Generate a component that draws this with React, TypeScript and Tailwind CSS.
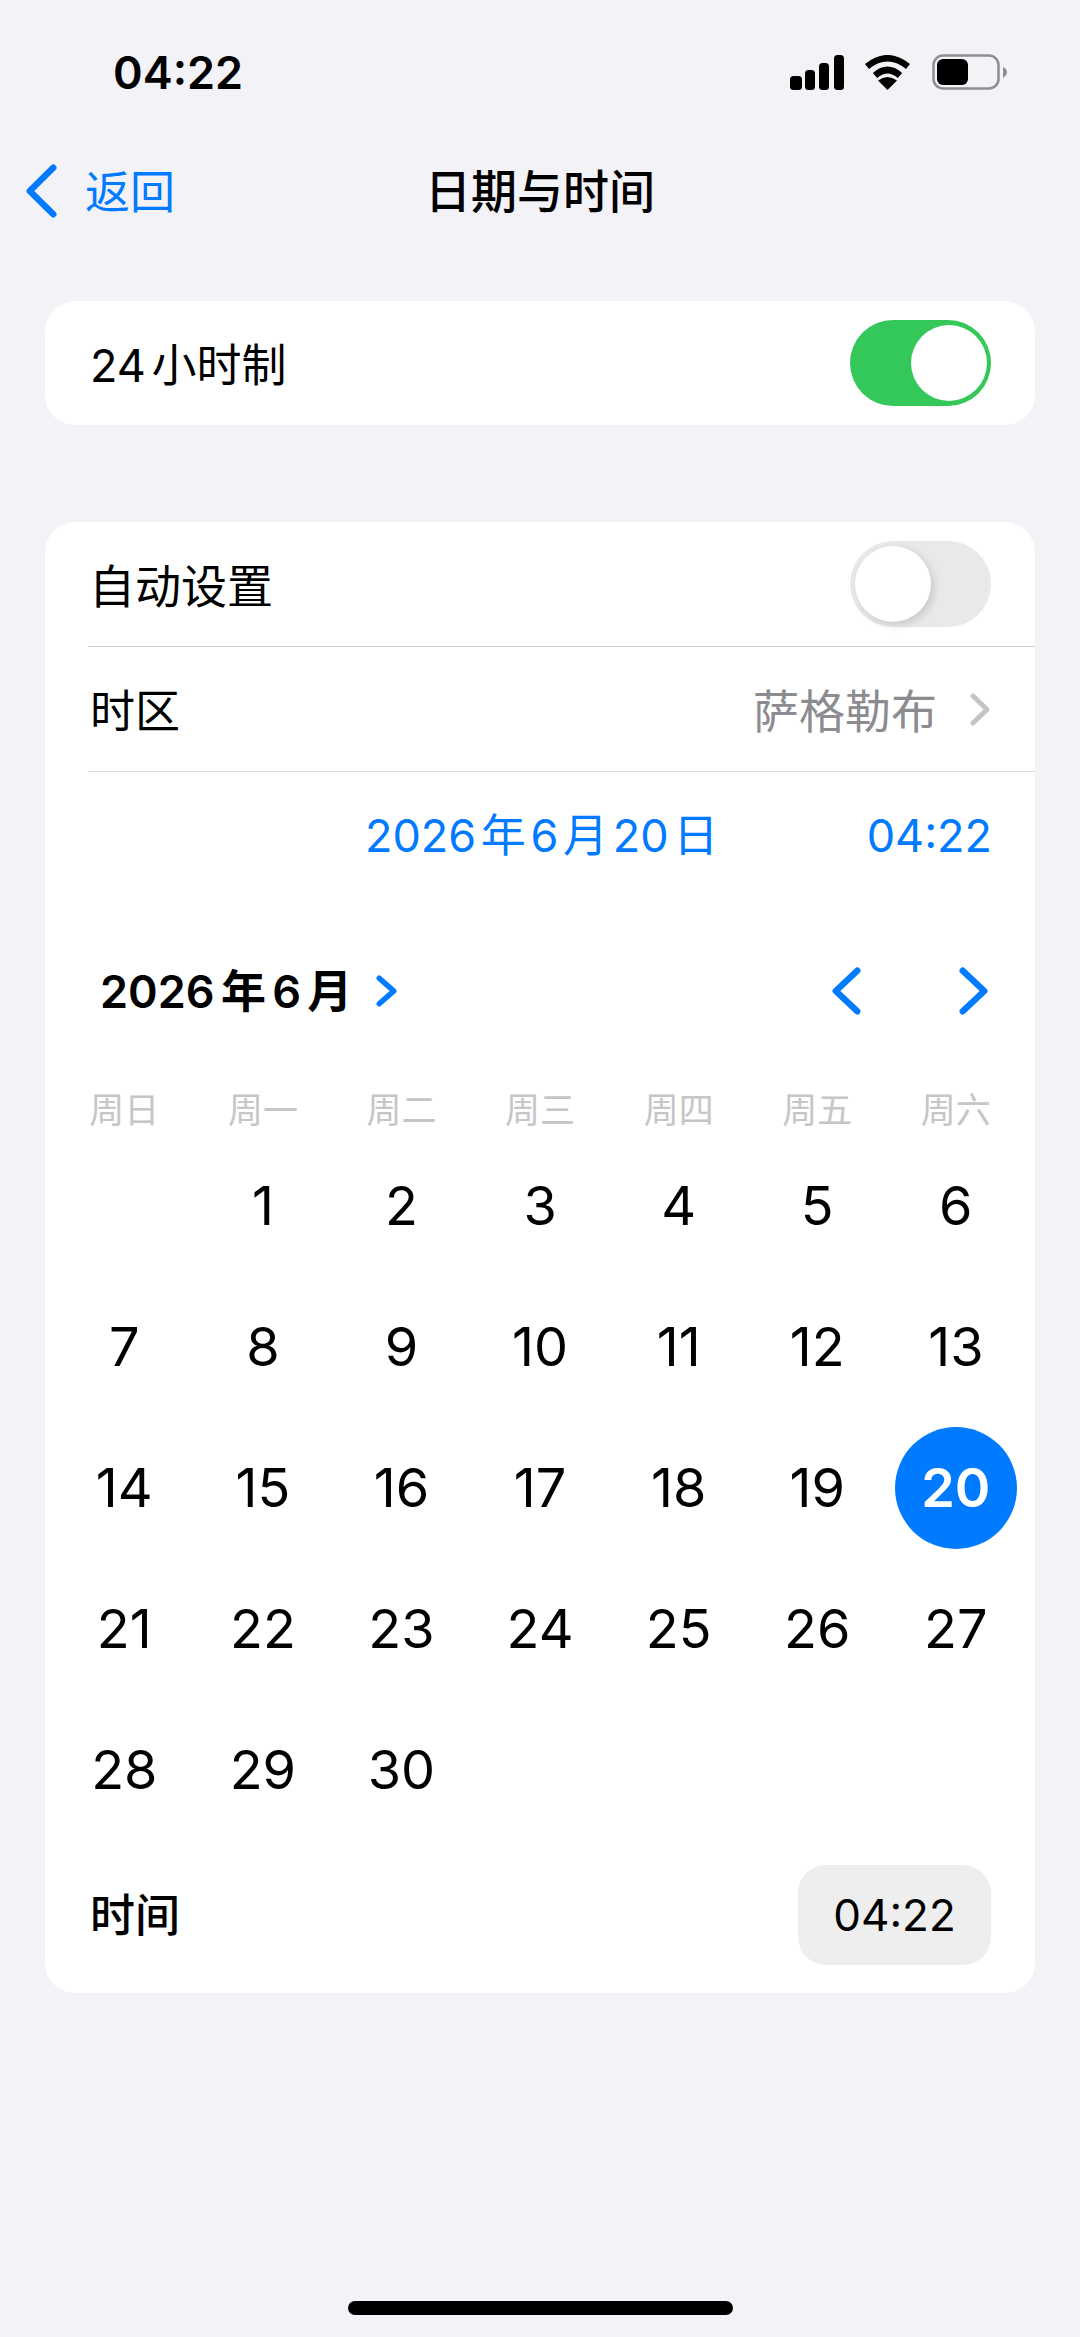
const font = "font-['Inter','Noto_Sans_CJK_SC',sans-serif]";

const weeks: (number | null)[][] = [
  [null, 1, 2, 3, 4, 5, 6],
  [7, 8, 9, 10, 11, 12, 13],
  [14, 15, 16, 17, 18, 19, 20],
  [21, 22, 23, 24, 25, 26, 27],
  [28, 29, 30, null, null, null, null],
];

const weekdays = ["周日", "周一", "周二", "周三", "周四", "周五", "周六"];

const Chevron = ({
  dir,
  w,
  h,
  sw,
  color,
}: {
  dir: "left" | "right";
  w: number;
  h: number;
  sw: number;
  color: string;
}) => {
  const p = sw / 2 + 0.5;
  const d =
    dir === "left"
      ? `M${w - p} ${p} L${p} ${h / 2} L${w - p} ${h - p}`
      : `M${p} ${p} L${w - p} ${h / 2} L${p} ${h - p}`;
  return (
    <svg width={w} height={h} viewBox={`0 0 ${w} ${h}`} fill="none">
      <path d={d} stroke={color} strokeWidth={sw} strokeLinecap="round" strokeLinejoin="round" />
    </svg>
  );
};

const StatusIcons = () => (
  <div className="flex items-center">
    <svg width="54" height="35" viewBox="0 0 54 35" fill="#000">
      <rect x="0" y="21" width="12" height="14" rx="3.5" />
      <rect x="15" y="15" width="10" height="20" rx="3.5" />
      <rect x="29" y="8" width="10" height="27" rx="3.5" />
      <rect x="44" y="0" width="10" height="35" rx="3.5" />
    </svg>
    <svg className="ml-[20px]" width="47" height="35" viewBox="0 0 47 35" fill="none">
      <path d="M3 11.5 Q23.500 -5 44 11.500" stroke="#000" strokeWidth="6.500" />
      <path d="M11 20.500 Q23.500 9.500 36 20.500" stroke="#000" strokeWidth="6.500" />
      <path d="M23.500 35 L14 25.500 Q23.500 18.500 33 25.500 Z" fill="#000" />
    </svg>
    <svg className="ml-[21px]" width="75" height="36" viewBox="0 0 75 36" fill="none">
      <rect x="1.500" y="1.500" width="65" height="33" rx="9.500" stroke="#8e8e92" strokeWidth="2.500" />
      <rect x="5" y="5" width="31" height="26" rx="6" fill="#000" />
      <path d="M71 13 Q75 15 75 18 Q75 21 71 24 Z" fill="#8e8e92" />
    </svg>
  </div>
);

const Toggle = ({ on }: { on: boolean }) =>
  on ? (
    <div className="flex h-[86px] w-[141px] items-center justify-end rounded-full bg-[#34c85a] pr-[4px]">
      <div className="size-[76px] rounded-full bg-white" />
    </div>
  ) : (
    <div className="flex h-[86px] w-[141px] items-center rounded-full bg-[#e9e9ea] pl-[5px]">
      <div className="size-[76px] rounded-full bg-white shadow-[3px_3px_8px_rgba(0,0,0,0.14)]" />
    </div>
  );

export default function App() {
  return (
    <div className={`${font} flex h-[2337px] w-[1080px] flex-col bg-[#f2f2f7] text-black`}>
      {/* status bar */}
      <div className="flex h-[144px] items-center justify-between pl-[113px] pr-[73px]">
        <span className="text-[45px] leading-none font-semibold">04:22</span>
        <StatusIcons />
      </div>

      {/* nav */}
      <div className="relative flex h-[94px] items-center pl-[26px]">
        <Chevron dir="left" w={31} h={54} sw={6.5} color="#007aff" />
        <span className="ml-[28px] pt-[2px] text-[45px] leading-none text-[#007aff]">返回</span>
        <span className="absolute left-0 right-0 text-center text-[46px] leading-none font-medium">
          日期与时间
        </span>
      </div>

      {/* 24h */}
      <div className="mx-[45px] mt-[63px] flex h-[124px] items-center justify-between rounded-[30px] bg-white pl-[45px] pr-[44px]">
        <span className="pt-[4px] text-[45px] leading-none [word-spacing:-7px]">24 小时制</span>
        <Toggle on />
      </div>

      {/* date & time card */}
      <div className="mx-[45px] mt-[97px] rounded-[30px] bg-white pb-[28px]">
        <div className="flex h-[124px] items-center justify-between pl-[44px] pr-[44px]">
          <span className="pt-[4px] text-[46px] leading-none">自动设置</span>
          <Toggle on={false} />
        </div>
        <div className="ml-[43px] h-px bg-[#d0d0d3]" />
        <div className="flex h-[124px] items-center justify-between pl-[45px] pr-[45px]">
          <span className="pt-[4px] text-[45px] leading-none">时区</span>
          <div className="flex items-center">
            <span className="pt-[4px] text-[46px] leading-none text-[#8c8c90]">萨格勒布</span>
            <div className="ml-[33px]">
              <Chevron dir="right" w={20} h={33} sw={5} color="#c4c4c7" />
            </div>
          </div>
        </div>
        <div className="ml-[43px] h-px bg-[#dcdcde]" />

        <div className="flex h-[126px] items-center justify-between pl-[320px] pr-[43px] text-[45px] leading-none text-[#007aff]">
          <span className="[word-spacing:-8px]">2026 年 6 月 20 日</span>
          <span>04:22</span>
        </div>

        {/* month header */}
        <div className="mt-[51px] flex h-[84px] items-center justify-between pl-[55px] pr-[47px]">
          <div className="flex items-center">
            <span className="text-[45px] leading-none font-semibold [word-spacing:-5px]">2026 年 6 月</span>
            <div className="ml-[24px]">
              <Chevron dir="right" w={21} h={32} sw={5.5} color="#007aff" />
            </div>
          </div>
          <div className="flex items-center gap-[98px]">
            <Chevron dir="left" w={29} h={48} sw={6.5} color="#007aff" />
            <Chevron dir="right" w={29} h={48} sw={6.5} color="#007aff" />
          </div>
        </div>

        {/* calendar */}
        <div className="mt-[55px] px-[10px]">
          <div className="grid h-[45px] grid-cols-[repeat(7,138.6px)] items-center">
            {weekdays.map((d) => (
              <span key={d} className="text-center text-[35px] leading-none text-[#c6c6c8]">
                {d}
              </span>
            ))}
          </div>
          {weeks.map((week, i) => (
            <div key={i} className={`grid h-[141px] grid-cols-[repeat(7,138.6px)] items-center ${i === 0 ? "mt-[2px]" : ""}`}>
              {week.map((day, j) => (
                <div key={j} className="flex justify-center">
                  {day === 20 ? (
                    <span className="flex size-[122px] items-center justify-center rounded-full bg-[#007aff] text-[54px] leading-none font-semibold text-white">
                      {day}
                    </span>
                  ) : (
                    <span className="text-[54px] leading-none">{day}</span>
                  )}
                </div>
              ))}
            </div>
          ))}
        </div>

        {/* time */}
        <div className="mt-[25px] flex items-center justify-between pl-[45px] pr-[44px]">
          <span className="text-[45px] leading-none font-medium">时间</span>
          <div className="flex h-[100px] w-[193px] items-center justify-center rounded-[28px] bg-[#eeeeef] text-[44px] leading-none">
            04:22
          </div>
        </div>
      </div>

      {/* home indicator */}
      <div className="mt-auto mb-[22px] flex justify-center">
        <div className="h-[14px] w-[385px] rounded-full bg-black" />
      </div>
    </div>
  );
}
